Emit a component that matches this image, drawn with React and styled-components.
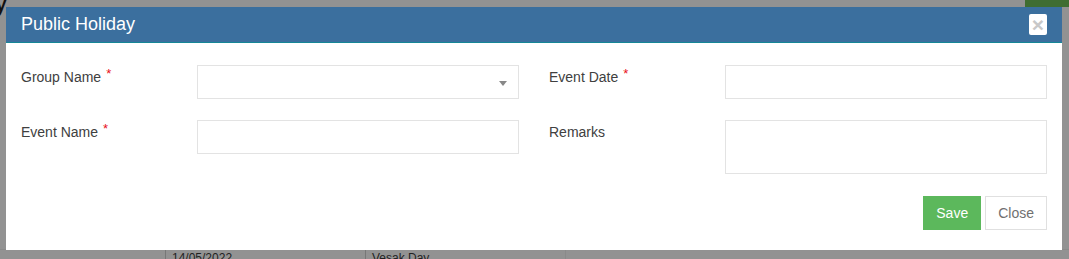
import styled, { createGlobalStyle } from "styled-components";

const GlobalStyle = createGlobalStyle`
    html, body {
        margin: 0;
        padding: 0;
        background: #929292;
        font-family: "Liberation Sans", Arial, sans-serif;
    }
`

const StyledPage = styled.div`
    position: relative;
    width: 1069px;
    height: 259px;
    overflow: hidden;
    background: #929292;
    display: flex;
    flex-direction: column;
    justify-content: space-between;
`
const StyledPageTop = styled.div`
    display: flex;
    justify-content: space-between;
    height: 7px;
`
const StyledPageHeading = styled.span`
    margin-left: -6px;
    margin-top: -12px;
    font-size: 28px;
    color: #111;
    line-height: 1;
`
const StyledPageButton = styled.div`
    width: 44px;
    height: 7px;
    background: #3f6d31;
`
const StyledTableRow = styled.div`
    display: grid;
    grid-template-columns: 165px 200px 200px 1fr;
    height: 9px;
    border-top: 1px solid #8a8a8a;
`
const StyledTableCell = styled.div`
    border-left: 1px solid ${p => p.$dark ? '#777' : '#8a8a8a'};
    padding-left: 6px;
    font-size: 12px;
    line-height: 16px;
    color: #222;
    overflow: hidden;
    height: 9px;
`

const StyledModal = styled.section`
    position: absolute;
    left: 6px;
    top: 7px;
    width: 1056px;
    background: #fff;
    display: flex;
    flex-direction: column;
`
const StyledHeader = styled.header`
    height: 35px;
    background: #3b6f9e;
    border-bottom: 1px solid #168797;
    display: flex;
    align-items: center;
    justify-content: space-between;
    padding: 0 15px;
`
const StyledTitle = styled.h1`
    margin: 0;
    color: #fff;
    font-size: 18px;
    font-weight: 400;
`
const StyledCloseX = styled.button`
    width: 18px;
    height: 21px;
    border: none;
    border-radius: 2px;
    background: #fff;
    color: #c8c8c8;
    font-family: "Liberation Sans", Arial, sans-serif;
    font-size: 21px;
    font-weight: 700;
    line-height: 21px;
    padding: 0;
    display: flex;
    align-items: center;
    justify-content: center;
`
const StyledBody = styled.div`
    padding: 22px 15px 0;
    display: grid;
    grid-template-columns: 498px 498px;
    column-gap: 30px;
    row-gap: 21px;
`
const StyledField = styled.div`
    display: grid;
    grid-template-columns: 176px 322px;
    align-items: start;
`
const StyledLabel = styled.label`
    color: #404040;
    font-size: 14px;
    line-height: 20px;
    padding-top: 2px;
`
const StyledRequired = styled.span`
    color: #e8101a;
    font-size: 13px;
    margin-left: 5px;
    position: relative;
    top: -4px;
`
const StyledInput = styled.div`
    box-sizing: border-box;
    height: ${p => p.$tall ? '54px' : '34px'};
    border: 1px solid #e3e3e3;
    background: #fff;
    display: flex;
    align-items: center;
    justify-content: flex-end;
    padding-right: 11px;
`
const StyledArrow = styled.span`
    width: 0;
    height: 0;
    border-left: 4px solid transparent;
    border-right: 4px solid transparent;
    border-top: 5px solid #888;
    margin-top: 3px;
`
const StyledFooter = styled.footer`
    display: flex;
    justify-content: flex-end;
    gap: 4px;
    padding: 22px 15px 20px;
`
const StyledButton = styled.button`
    box-sizing: border-box;
    height: 34px;
    padding: 0 12px;
    font-family: "Liberation Sans", Arial, sans-serif;
    font-size: 14px;
    border: 1px solid ${p => p.$primary ? '#5cb85c' : '#e0e0e0'};
    background: ${p => p.$primary ? '#5cb85c' : '#fff'};
    color: ${p => p.$primary ? '#fff' : '#707070'};
    border-radius: 0;
`

const Field = ({ label, required, select, tall }) => (
    <StyledField>
        <StyledLabel>
            {label}{required && <StyledRequired>*</StyledRequired>}
        </StyledLabel>
        <StyledInput $tall={tall}>
            {select && <StyledArrow />}
        </StyledInput>
    </StyledField>
)

const App = () => {
    return (
        <StyledPage>
            <GlobalStyle />
            <StyledPageTop>
                <StyledPageHeading>y</StyledPageHeading>
                <StyledPageButton />
            </StyledPageTop>
            <StyledTableRow>
                <div />
                <StyledTableCell $dark>14/05/2022</StyledTableCell>
                <StyledTableCell $dark>Vesak Day</StyledTableCell>
                <StyledTableCell />
            </StyledTableRow>

            <StyledModal>
                <StyledHeader>
                    <StyledTitle>Public Holiday</StyledTitle>
                    <StyledCloseX>×</StyledCloseX>
                </StyledHeader>
                <StyledBody>
                    <Field label="Group Name" required select />
                    <Field label="Event Date" required />
                    <Field label="Event Name" required />
                    <Field label="Remarks" tall />
                </StyledBody>
                <StyledFooter>
                    <StyledButton $primary>Save</StyledButton>
                    <StyledButton>Close</StyledButton>
                </StyledFooter>
            </StyledModal>
        </StyledPage>
    )
}

export default App
